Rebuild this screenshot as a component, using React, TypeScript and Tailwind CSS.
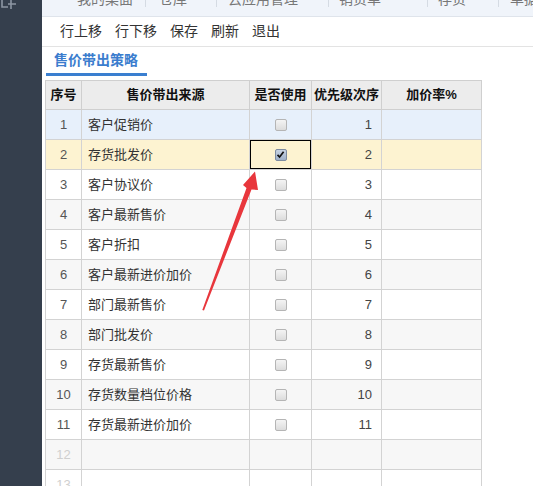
import React from "react";

// Rows shown in the pricing-strategy grid
const rows = [
  { no: 1, name: "客户促销价", used: false, order: 1 },
  { no: 2, name: "存货批发价", used: true, order: 2 },
  { no: 3, name: "客户协议价", used: false, order: 3 },
  { no: 4, name: "客户最新售价", used: false, order: 4 },
  { no: 5, name: "客户折扣", used: false, order: 5 },
  { no: 6, name: "客户最新进价加价", used: false, order: 6 },
  { no: 7, name: "部门最新售价", used: false, order: 7 },
  { no: 8, name: "部门批发价", used: false, order: 8 },
  { no: 9, name: "存货最新售价", used: false, order: 9 },
  { no: 10, name: "存货数量档位价格", used: false, order: 10 },
  { no: 11, name: "存货最新进价加价", used: false, order: 11 },
];

const tabs = [
  { label: "我的桌面", w: "w-[101px]", pl: "pl-[32px]" },
  { label: "仓库", w: "w-[71px]", pl: "pl-[13px]" },
  { label: "云应用管理", w: "w-[112px]", pl: "pl-[11px]" },
  { label: "销货单", w: "w-[99px]", pl: "pl-[10px]" },
  { label: "存货", w: "w-[71px]", pl: "pl-[10px]" },
  { label: "单据", w: "w-[80px]", pl: "pl-[11px]" },
];

const Checkbox = ({ checked }: { checked: boolean }) => (
  <span
    className={
      checked
        ? "inline-flex h-[12px] w-[12px] items-center justify-center rounded-[2px] border border-[#7d8ba0] bg-gradient-to-b from-[#c8d3e2] to-[#9fb0c8]"
        : "inline-block h-[12px] w-[12px] rounded-[2px] border border-[#b5b5b5] bg-gradient-to-b from-[#f4f4f4] to-[#dcdcdc]"
    }
  >
    {checked && (
      <svg width="9" height="9" viewBox="0 0 9 9">
        <path d="M1.5 4.8 L3.6 7 L7.6 1.8" fill="none" stroke="#111" strokeWidth="1.7" />
      </svg>
    )}
  </span>
);

export default function App() {
  const rowBg = (no: number) => {
    if (no === 1) return "bg-[#e7f0fb]";
    if (no === 2) return "bg-[#fdf3d1]";
    return no % 2 === 0 ? "bg-[#f7f7f7]" : "bg-white";
  };

  return (
    <div
      className="relative flex h-[486px] w-[533px] overflow-hidden bg-white text-[#333]"
      style={{ fontFamily: '"Liberation Sans", "Noto Sans CJK SC", sans-serif' }}
    >
      {/* left sidebar */}
      <div className="relative h-full w-[42px] shrink-0 bg-[#353f4d]">
        <svg className="absolute left-0 top-0" width="18" height="12" viewBox="0 0 18 12">
          <path d="M2 0 V7 H8 M11 0 V9 M8 4 H16" fill="none" stroke="#8d96a3" strokeWidth="1.6" />
        </svg>
      </div>

      <div className="flex min-w-0 flex-1 flex-col">
        {/* top tab strip (cut off) */}
        <div className="h-[17px] shrink-0 overflow-hidden border-b border-[#dfe4eb] bg-[#f0f4fa] pl-[3px]">
          <div className="-mt-[9px] flex text-[14px] leading-4 text-[#777]">
            {tabs.map((t) => (
              <div key={t.label} className={`${t.w} ${t.pl} shrink-0 whitespace-nowrap border-r border-[#d5dbe3]`}>
                {t.label}
              </div>
            ))}
          </div>
        </div>

        {/* toolbar */}
        <div className="flex h-[30px] shrink-0 items-center gap-[13px] border-b border-[#e3e3e3] pl-[18px] text-[14px] text-[#333]">
          <span>行上移</span>
          <span>行下移</span>
          <span>保存</span>
          <span>刷新</span>
          <span>退出</span>
        </div>

        {/* tab title */}
        <div className="pl-[4px]">
          <div className="w-[101px] border-b-[3px] border-[#3a7fd0] pb-[3px] pt-[4px] pl-[8px] text-[14px] font-bold leading-[19px] text-[#3b7dce]">
            售价带出策略
          </div>
        </div>

        {/* grid */}
        <div className="pl-[3px] pt-[4px]">
          <table className="table-fixed border-collapse text-[13px]">
            <colgroup>
              <col className="w-[36px]" />
              <col className="w-[168px]" />
              <col className="w-[62px]" />
              <col className="w-[70px]" />
              <col className="w-[100px]" />
            </colgroup>
            <thead>
              <tr className="h-[29px] bg-[#ececec] font-bold text-[#111]">
                <th className="border border-[#cfcfcf] px-0 font-bold">序号</th>
                <th className="border border-[#cfcfcf] font-bold">售价带出来源</th>
                <th className="whitespace-nowrap border border-[#cfcfcf] px-0 font-bold">是否使用</th>
                <th className="whitespace-nowrap border border-[#cfcfcf] px-0 font-bold">优先级次序</th>
                <th className="border border-[#cfcfcf] font-bold">加价率%</th>
              </tr>
            </thead>
            <tbody>
              {rows.map((r) => (
                <tr key={r.no} className={`h-[30px] ${rowBg(r.no)}`}>
                  <td className="border border-[#d3d3d3] text-center text-[#555]">{r.no}</td>
                  <td className="border border-[#d3d3d3] pl-[6px]">{r.name}</td>
                  <td
                    className={
                      r.used
                        ? "border border-[#d3d3d3] text-center shadow-[inset_0_0_0_1px_#000]"
                        : "border border-[#d3d3d3] text-center"
                    }
                  >
                    <div className="flex items-center justify-center">
                      <Checkbox checked={r.used} />
                    </div>
                  </td>
                  <td className="border border-[#d3d3d3] pr-[9px] text-right text-[#444]">{r.order}</td>
                  <td className="border border-[#d3d3d3]"></td>
                </tr>
              ))}
              <tr className="h-[30px] bg-[#f7f7f7]">
                <td className="border border-[#d3d3d3] text-center text-[#cfcfcf]">12</td>
                <td className="border border-[#d3d3d3]"></td>
                <td className="border border-[#d3d3d3]"></td>
                <td className="border border-[#d3d3d3]"></td>
                <td className="border border-[#d3d3d3]"></td>
              </tr>
              <tr className="h-[30px] bg-white">
                <td className="border border-[#d3d3d3] text-center text-[#cfcfcf]">13</td>
                <td className="border border-[#d3d3d3]"></td>
                <td className="border border-[#d3d3d3]"></td>
                <td className="border border-[#d3d3d3]"></td>
                <td className="border border-[#d3d3d3]"></td>
              </tr>
            </tbody>
          </table>
        </div>
      </div>

      {/* red annotation arrow */}
      <svg className="pointer-events-none absolute left-0 top-0" width="533" height="486" viewBox="0 0 533 486">
        <polygon
          points="202.3,310 246.5,188 243,185 255,171.5 258,190 251.5,189.5 204,310.5"
          fill="#e8363c"
        />
      </svg>
    </div>
  );
}
